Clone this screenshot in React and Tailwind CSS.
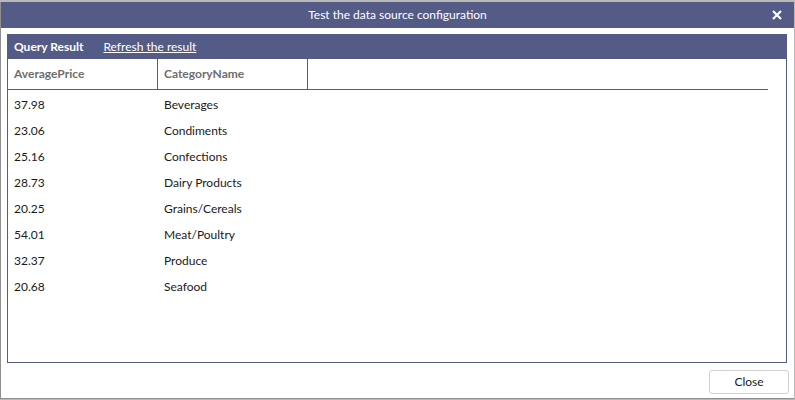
const rows = [
  ["37.98", "Beverages"],
  ["23.06", "Condiments"],
  ["25.16", "Confections"],
  ["28.73", "Dairy Products"],
  ["20.25", "Grains/Cereals"],
  ["54.01", "Meat/Poultry"],
  ["32.37", "Produce"],
  ["20.68", "Seafood"],
];

function App() {
  return (
    <div className="h-[400px] w-[795px] overflow-hidden bg-[#b9b9b9] pt-[2px] font-['Lato',sans-serif]">
      <div className="flex h-[397px] w-[794px] flex-col border-b border-l border-[#8f8f8f] bg-white">
        {/* title bar */}
        <div className="relative flex h-[26px] shrink-0 items-center justify-center bg-[#535b86] text-[12px] text-white">
          <span>Test the data source configuration</span>
          <svg
            className="absolute right-[12px] top-[8px]"
            width="10"
            height="10"
            viewBox="0 0 10 10"
          >
            <path d="M1 1 L9 9 M9 1 L1 9" stroke="white" strokeWidth="2.2" />
          </svg>
        </div>

        <div className="ml-[6px] mt-[6px] flex h-[329px] w-[780px] flex-col border border-[#535b86]">
          <div className="flex h-[24px] shrink-0 items-center gap-[20px] bg-[#535b86] pl-[6px] text-[12px] text-white">
            <span className="font-bold">Query Result</span>
            <span className="underline">Refresh the result</span>
          </div>
          <div className="w-[760px]">
            <div className="flex h-[31px] border-b border-[#535b86] text-[12px] font-bold text-[#6e6e6e]">
              <div className="flex w-[150px] items-center border-r border-[#535b86] pl-[6px]">
                AveragePrice
              </div>
              <div className="flex w-[150px] items-center border-r border-[#535b86] pl-[6px]">
                CategoryName
              </div>
            </div>
            <div className="pt-[2px]">
              {rows.map(([price, name]) => (
                <div key={name} className="flex h-[26px] items-center text-[12px] text-[#1a1a1a]">
                  <div className="w-[150px] pl-[6px]">{price}</div>
                  <div className="w-[150px] pl-[6px]">{name}</div>
                </div>
              ))}
            </div>
          </div>
        </div>

        <div className="flex justify-end pr-[5px] pt-[7px]">
          <button className="h-[24px] w-[80px] rounded-[3px] border border-[#d0d0d0] bg-white text-[12px] text-[#1a1a1a]">
            Close
          </button>
        </div>
      </div>
    </div>
  );
}

export default App;
